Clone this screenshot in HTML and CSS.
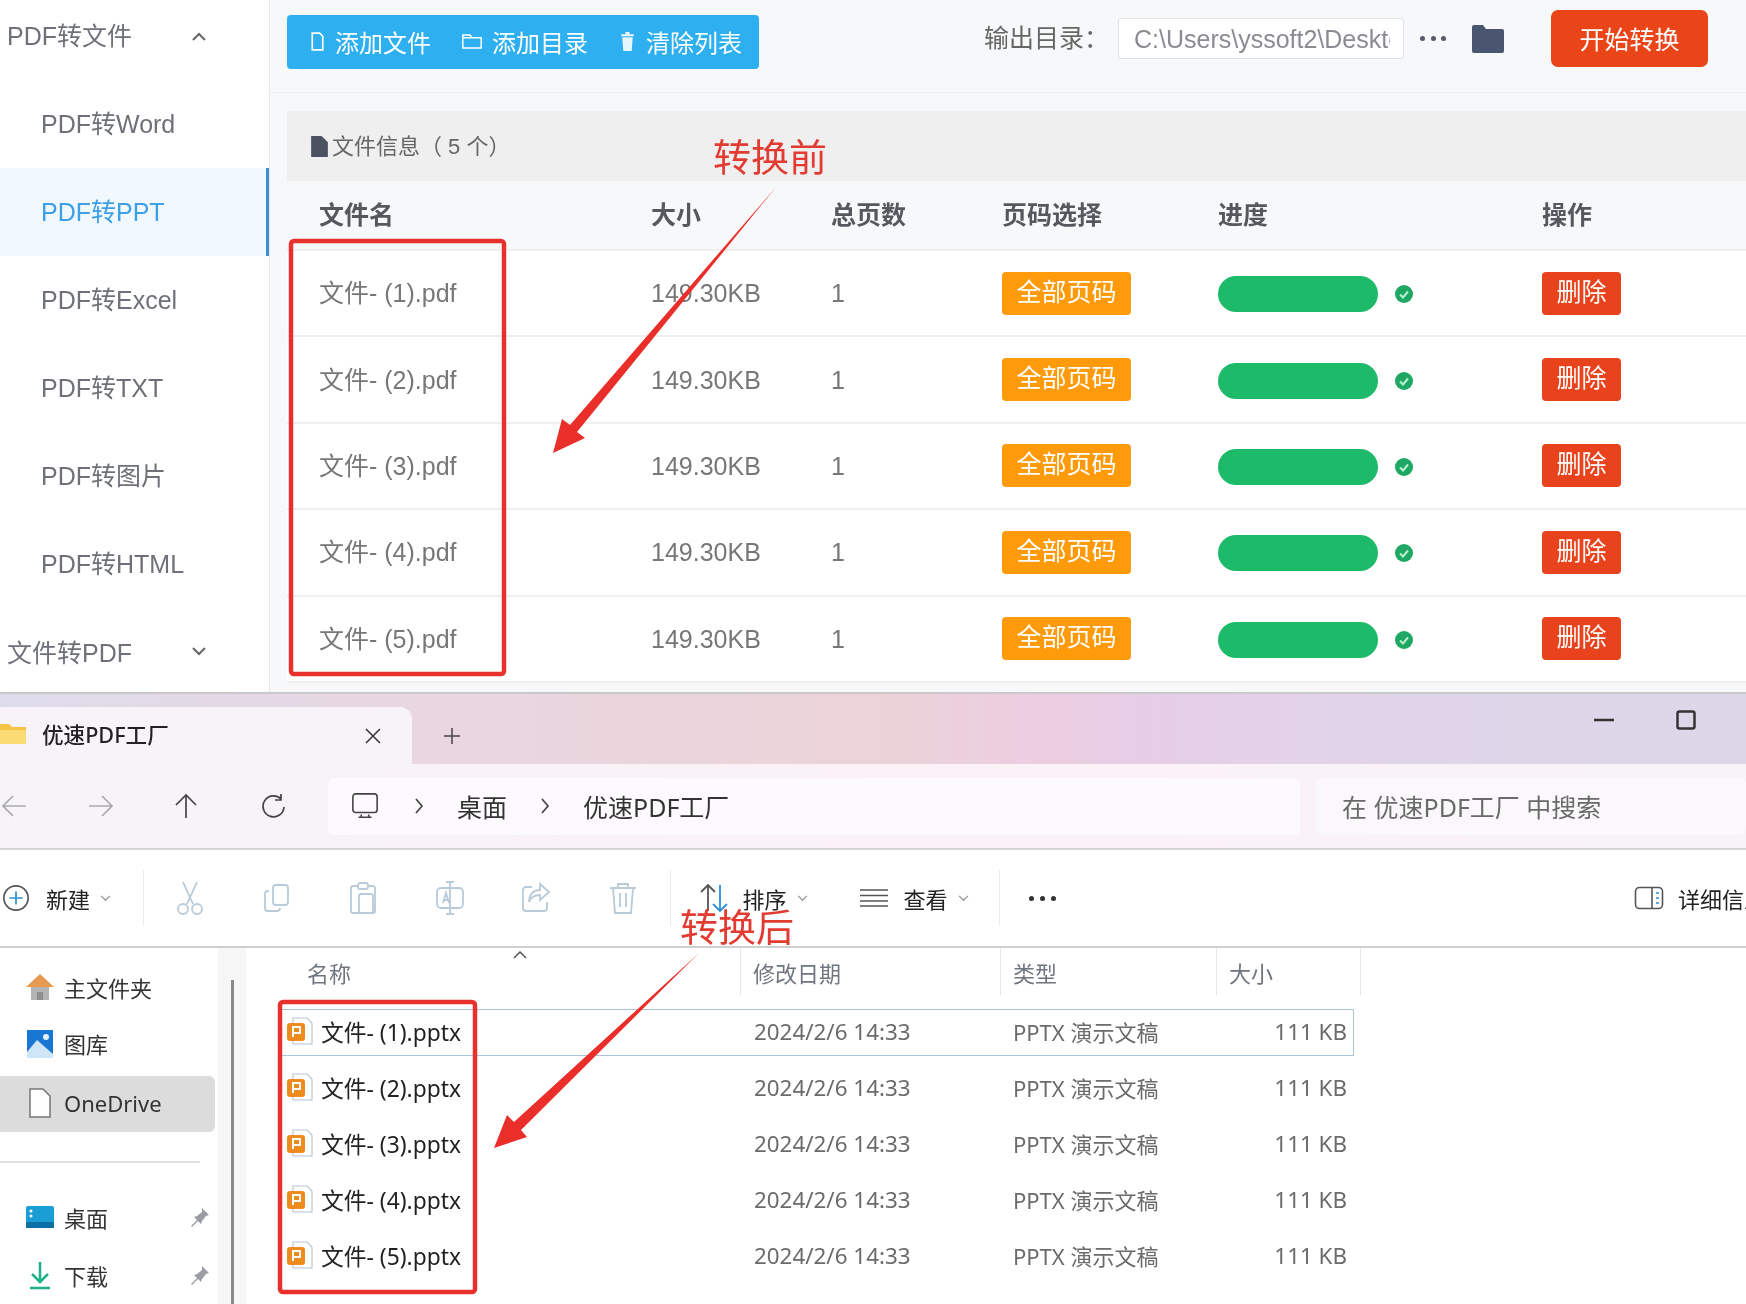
FILE: index.html
```html
<!DOCTYPE html>
<html lang="zh-CN">
<head>
<meta charset="utf-8">
<title>PDF转PPT</title>
<link rel="stylesheet" href="styles.css">
</head>
<body>
<div class="page">
  <section class="app">
    <nav class="side">
      <div class="side-item group first"><span>PDF转文件</span><svg class="chev" viewBox="0 0 16 16"><path d="M2 11l6-6 6 6"/></svg></div>
      <div class="side-item">PDF转Word</div>
      <div class="side-item active">PDF转PPT</div>
      <div class="side-item">PDF转Excel</div>
      <div class="side-item">PDF转TXT</div>
      <div class="side-item">PDF转图片</div>
      <div class="side-item">PDF转HTML</div>
      <div class="side-item group"><span>文件转PDF</span><svg class="chev" viewBox="0 0 16 16"><path d="M2 5l6 6 6-6"/></svg></div>
    </nav>
    <main class="main">
      <header class="bar">
        <div class="btn-group">
          <span class="bg-item"><svg class="bg-ico" viewBox="0 0 16 20"><path d="M3 2h7l3 3v13H3z"/></svg>添加文件</span>
          <span class="bg-item"><svg class="bg-ico wide" viewBox="0 0 24 20"><path d="M2 3h8l2 3h10v11H2zM2 6h10"/></svg>添加目录</span>
          <span class="bg-item"><svg class="bg-ico fill" viewBox="0 0 16 20"><path d="M6 1h4v2h4v2H2V3h4zM3 6h10l-1 13H4z"/></svg>清除列表</span>
        </div>
        <div class="out">
          <span class="out-label">输出目录：</span>
          <span class="out-input"><span class="out-text">C:\Users\yssoft2\Desktop</span></span>
          <span class="out-dots"><i></i><i></i><i></i></span>
          <svg class="out-folder" viewBox="0 0 34 30"><path d="M1 3a2 2 0 0 1 2-2h9l3 4h16a2 2 0 0 1 2 2v20a2 2 0 0 1-2 2H3a2 2 0 0 1-2-2z"/></svg>
          <span class="start">开始转换</span>
        </div>
      </header>
      <div class="content">
        <div class="info">
          <svg class="info-ico" viewBox="0 0 18 22"><path d="M1 1h10l6 6v14H1z"/></svg>
          <span class="info-text">文件信息（ 5 个）</span>
        </div>
        <div class="row head"><span>文件名</span><span>大小</span><span>总页数</span><span>页码选择</span><span>进度</span><span>操作</span></div>
        <div class="row"><span>文件- (1).pdf</span><span>149.30KB</span><span>1</span><span><b class="b-page">全部页码</b></span><span class="prog"><i class="bar-fill"></i><svg class="ok" viewBox="0 0 18 18"><circle cx="9" cy="9" r="9"/><path d="M5 9.5l3 3 5-6"/></svg></span><span><b class="b-del">删除</b></span></div>
        <div class="row"><span>文件- (2).pdf</span><span>149.30KB</span><span>1</span><span><b class="b-page">全部页码</b></span><span class="prog"><i class="bar-fill"></i><svg class="ok" viewBox="0 0 18 18"><circle cx="9" cy="9" r="9"/><path d="M5 9.5l3 3 5-6"/></svg></span><span><b class="b-del">删除</b></span></div>
        <div class="row"><span>文件- (3).pdf</span><span>149.30KB</span><span>1</span><span><b class="b-page">全部页码</b></span><span class="prog"><i class="bar-fill"></i><svg class="ok" viewBox="0 0 18 18"><circle cx="9" cy="9" r="9"/><path d="M5 9.5l3 3 5-6"/></svg></span><span><b class="b-del">删除</b></span></div>
        <div class="row"><span>文件- (4).pdf</span><span>149.30KB</span><span>1</span><span><b class="b-page">全部页码</b></span><span class="prog"><i class="bar-fill"></i><svg class="ok" viewBox="0 0 18 18"><circle cx="9" cy="9" r="9"/><path d="M5 9.5l3 3 5-6"/></svg></span><span><b class="b-del">删除</b></span></div>
        <div class="row"><span>文件- (5).pdf</span><span>149.30KB</span><span>1</span><span><b class="b-page">全部页码</b></span><span class="prog"><i class="bar-fill"></i><svg class="ok" viewBox="0 0 18 18"><circle cx="9" cy="9" r="9"/><path d="M5 9.5l3 3 5-6"/></svg></span><span><b class="b-del">删除</b></span></div>
      </div>
    </main>
  </section>

  <section class="explorer">
    <div class="titlebar">
      <div class="tab">
        <svg class="tab-folder" viewBox="0 0 26 24"><path d="M-2 2h11l3 3h14v17H-2z" fill="#f6c445"/><path d="M-2 8h28v14H-2z" fill="#fbdc74"/></svg>
        <span class="tab-title">优速PDF工厂</span>
        <svg class="tab-x" viewBox="0 0 16 16"><path d="M1 1l14 14M15 1L1 15"/></svg>
      </div>
      <svg class="tab-plus" viewBox="0 0 18 18"><path d="M9 1v16M1 9h16"/></svg>
      <div class="win">
        <svg class="win-min" viewBox="0 0 20 4"><path d="M0 2h20"/></svg>
        <svg class="win-max" viewBox="0 0 20 20"><rect x="1.5" y="1.5" width="17" height="17" rx="2"/></svg>
      </div>
    </div>
    <div class="navbar">
      <svg class="nav-ico dim" viewBox="0 0 26 26"><path d="M25 13H2M12 3L2 13l10 10"/></svg>
      <svg class="nav-ico dim to-up" viewBox="0 0 26 26"><path d="M1 13h23M14 3l10 10-10 10"/></svg>
      <svg class="nav-ico" viewBox="0 0 26 26"><path d="M13 25V2M3 12L13 2l10 10"/></svg>
      <svg class="nav-ico refresh" viewBox="0 0 26 26"><path d="M21 6a10.500 10.500 0 1 0 3 8M21 1v6h-6"/></svg>
      <div class="path">
        <svg class="pc" viewBox="0 0 30 30"><rect x="2" y="2" width="26" height="20" rx="3"/><path d="M8 27h14M11 24v3M19 24v3"/></svg>
        <svg class="crumb" viewBox="0 0 10 18"><path d="M2 2l6 7-6 7"/></svg>
        <span>桌面</span>
        <svg class="crumb" viewBox="0 0 10 18"><path d="M2 2l6 7-6 7"/></svg>
        <span>优速PDF工厂</span>
      </div>
      <div class="search">在 优速PDF工厂 中搜索</div>
    </div>
    <div class="toolbar">
      <svg class="new-ico" viewBox="0 0 30 30"><circle cx="15" cy="15" r="13"/><path class="blue" d="M15 8v14M8 15h14"/></svg>
      <span class="tb-text">新建</span>
      <svg class="tb-chev" viewBox="0 0 12 8"><path d="M1 1l5 5 5-5"/></svg>
      <i class="tb-div first"></i>
      <svg class="tb-ico" viewBox="0 0 30 34"><path d="M8 1l10 22M22 1L12 23"/><circle cx="8" cy="28" r="5"/><circle cx="22" cy="28" r="5"/></svg>
      <svg class="tb-ico" viewBox="0 0 30 34"><rect x="11" y="4" width="15" height="20" rx="3"/><path d="M7 10H6a3 3 0 0 0-3 3v14a3 3 0 0 0 3 3h9a3 3 0 0 0 3-3"/></svg>
      <svg class="tb-ico" viewBox="0 0 30 34"><path d="M9 5H5a2 2 0 0 0-2 2v23a2 2 0 0 0 2 2h20a2 2 0 0 0 2-2V7a2 2 0 0 0-2-2h-4"/><rect x="10" y="2" width="10" height="6" rx="2"/><rect x="11" y="13" width="14" height="19" rx="2"/></svg>
      <svg class="tb-ico" viewBox="0 0 30 34"><rect x="2" y="7" width="26" height="20" rx="4"/><path d="M15 1v32M11 1h8M11 33h8M8 22l3-10 3 10M9 19h4"/></svg>
      <svg class="tb-ico" viewBox="0 0 30 34"><path d="M11 6H5a3 3 0 0 0-3 3v18a3 3 0 0 0 3 3h18a3 3 0 0 0 3-3v-6M19 3l9 8-9 8v-5c-6 0-9 2-11 7 0-7 4-12 11-12z"/></svg>
      <svg class="tb-ico last" viewBox="0 0 30 34"><path d="M2 7h26M10 7V3h10v4M5 7l2 25h16l2-25M12 12v14M18 12v14"/></svg>
      <i class="tb-div second"></i>
      <svg class="sort-ico" viewBox="0 0 30 30"><path class="dark" d="M9 28V2M2 9l7-7 7 7"/><path class="blue" d="M21 2v26M14 21l7 7 7-7"/></svg>
      <span class="tb-text sort-text">排序</span>
      <svg class="tb-chev" viewBox="0 0 12 8"><path d="M1 1l5 5 5-5"/></svg>
      <svg class="view-ico" viewBox="0 0 28 18"><path d="M0 1h28M0 6.500h28M0 12h28M0 17h28"/></svg>
      <span class="tb-text">查看</span>
      <svg class="tb-chev" viewBox="0 0 12 8"><path d="M1 1l5 5 5-5"/></svg>
      <i class="tb-div third"></i>
      <span class="more"><i></i><i></i><i></i></span>
      <svg class="detail-ico" viewBox="0 0 30 24"><rect x="1.500" y="1.500" width="27" height="21" rx="4"/><path d="M18 2v20"/><path class="blue" d="M22 7h3M22 12h3M22 17h3"/></svg>
      <span class="tb-text detail">详细信息</span>
    </div>
    <div class="body">
      <aside class="tree">
        <div class="tree-item"><svg class="tree-ico" viewBox="0 0 30 30"><path d="M15 2L1 15h5v13h18V15h5z" fill="#e99a52"/><path d="M6 15h18v13H6z" fill="#b4b4b4"/><path d="M12 20h6v8h-6z" fill="#8e8e8e"/></svg><span>主文件夹</span></div>
        <div class="tree-item"><svg class="tree-ico" viewBox="0 0 30 30"><path d="M2 2h26v28H2z" fill="#1877d2"/><path d="M2 24l10-12 16 14v4H2z" fill="#cfe6f8"/><circle cx="21" cy="9" r="3" fill="#e6f2fb"/></svg><span>图库</span></div>
        <div class="tree-item sel"><svg class="tree-ico" viewBox="0 0 30 30"><path class="doc" d="M5 1h13l7 7v21H5z"/></svg><span>OneDrive</span></div>
        <div class="tree-div"></div>
        <div class="tree-item"><svg class="tree-ico" viewBox="0 0 30 30"><rect x="1" y="4" width="28" height="22" rx="2" fill="#1b9ed3"/><path d="M1 20h28v6H1z" fill="#0d6fa8"/><circle cx="6" cy="9" r="1.500" fill="#fff"/><circle cx="6" cy="14" r="1.500" fill="#fff"/></svg><span class="grow">桌面</span><svg class="pin" viewBox="0 0 20 20"><path d="M12 1l7 7-3 1-4 5-1 3-3-3-6 6-1-1 6-6-3-3 3-1 5-4z"/></svg></div>
        <div class="tree-item next"><svg class="tree-ico" viewBox="0 0 30 30"><path class="dl" d="M15 2v20M7 14l8 8 8-8M5 28h20"/></svg><span class="grow">下载</span><svg class="pin" viewBox="0 0 20 20"><path d="M12 1l7 7-3 1-4 5-1 3-3-3-6 6-1-1 6-6-3-3 3-1 5-4z"/></svg></div>
      </aside>
      <div class="scroll"><i></i></div>
      <div class="list">
        <div class="list-head">
          <span class="lh name"><span>名称</span><svg class="sort-up" viewBox="0 0 14 8"><path d="M1 7l6-6 6 6"/></svg></span>
          <span class="lh">修改日期</span>
          <span class="lh">类型</span>
          <span class="lh">大小</span>
        </div>
        <div class="list-rows">
          <div class="f-row hot"><span class="f-name"><svg class="ppt" viewBox="0 0 26 28"><path class="sheet" d="M6 1h14l5 5v21H6z"/><rect x="0" y="6" width="18" height="18" rx="3" fill="#ef8a1d"/><path d="M6 10h7v6H6z M6 16v4" fill="none" stroke="#fff" stroke-width="2"/></svg>文件- (1).pptx</span><span>2024/2/6 14:33</span><span>PPTX 演示文稿</span><span class="f-size">111 KB</span></div>
          <div class="f-row"><span class="f-name"><svg class="ppt" viewBox="0 0 26 28"><path class="sheet" d="M6 1h14l5 5v21H6z"/><rect x="0" y="6" width="18" height="18" rx="3" fill="#ef8a1d"/><path d="M6 10h7v6H6z M6 16v4" fill="none" stroke="#fff" stroke-width="2"/></svg>文件- (2).pptx</span><span>2024/2/6 14:33</span><span>PPTX 演示文稿</span><span class="f-size">111 KB</span></div>
          <div class="f-row"><span class="f-name"><svg class="ppt" viewBox="0 0 26 28"><path class="sheet" d="M6 1h14l5 5v21H6z"/><rect x="0" y="6" width="18" height="18" rx="3" fill="#ef8a1d"/><path d="M6 10h7v6H6z M6 16v4" fill="none" stroke="#fff" stroke-width="2"/></svg>文件- (3).pptx</span><span>2024/2/6 14:33</span><span>PPTX 演示文稿</span><span class="f-size">111 KB</span></div>
          <div class="f-row"><span class="f-name"><svg class="ppt" viewBox="0 0 26 28"><path class="sheet" d="M6 1h14l5 5v21H6z"/><rect x="0" y="6" width="18" height="18" rx="3" fill="#ef8a1d"/><path d="M6 10h7v6H6z M6 16v4" fill="none" stroke="#fff" stroke-width="2"/></svg>文件- (4).pptx</span><span>2024/2/6 14:33</span><span>PPTX 演示文稿</span><span class="f-size">111 KB</span></div>
          <div class="f-row"><span class="f-name"><svg class="ppt" viewBox="0 0 26 28"><path class="sheet" d="M6 1h14l5 5v21H6z"/><rect x="0" y="6" width="18" height="18" rx="3" fill="#ef8a1d"/><path d="M6 10h7v6H6z M6 16v4" fill="none" stroke="#fff" stroke-width="2"/></svg>文件- (5).pptx</span><span>2024/2/6 14:33</span><span>PPTX 演示文稿</span><span class="f-size">111 KB</span></div>
        </div>
      </div>
    </div>
  </section>

  <svg class="marks" viewBox="0 0 1746 1304">
    <rect class="box" x="291" y="241" width="213" height="433" rx="3"/>
    <polygon class="arrow" points="776,187 577,432 585,438 553,453 562,419 570,425"/>
    <rect class="box" x="280" y="1002" width="195" height="290" rx="3"/>
    <polygon class="arrow" points="699,953 521,1130 527,1137 494,1148 507,1115 514,1122"/>
  </svg>
  <span class="note before">转换前</span>
  <span class="note after">转换后</span>
</div>
</body>
</html>
```

FILE: styles.css
```css
* { box-sizing: border-box; }
html, body { margin: 0; padding: 0; background: #fff; }
.page {
  position: relative;
  width: 1746px;
  height: 1304px;
  overflow: hidden;
  display: flex;
  flex-direction: column;
  filter: blur(0.7px);
  font-family: "Liberation Sans", "Noto Sans CJK SC", sans-serif;
}

/* upper application */
.app { display: flex; height: 694px; border-bottom: 2px solid #c9c9c9; background: #f7f8fa; overflow: hidden; flex: none; }
.side { width: 270px; flex: none; background: #fff; border-right: 1px solid #e9e9e9; }
.side-item { height: 88px; flex: none; display: flex; align-items: center; padding-left: 41px; padding-bottom: 4px; font-size: 25px; color: #6e7178; }
.side-item.group { padding-left: 7px; padding-right: 62px; justify-content: space-between; padding-bottom: 2px; }
.side-item.first { height: 80px; padding-bottom: 12px; }
.first .chev { margin-top: 6px; }
.side-item.active { background: #f0f8fe; color: #3d9fe6; border-right: 3px solid #3a8fd0; }
.chev { width: 16px; height: 16px; fill: none; stroke: #666; stroke-width: 2; }

.main { flex: 1; min-width: 0; display: flex; flex-direction: column; }
.bar { height: 93px; flex: none; display: flex; align-items: flex-start; justify-content: space-between; padding-left: 17px; padding-right: 38px; border-bottom: 1px solid #eeeff1; }
.btn-group { margin-top: 15px; width: 472px; height: 54px; background: #2eb0f0; border-radius: 4px; display: flex; align-items: center; gap: 30px; padding: 0 0 2px 22px; color: #fff; font-size: 24px; }
.bg-item { display: flex; align-items: center; gap: 9px; white-space: nowrap; }
.bg-ico { width: 17px; height: 21px; fill: none; stroke: #fff; stroke-width: 1.6; }
.bg-ico.wide { width: 22px; }
.bg-ico.fill { width: 19px; fill: #e6f6ff; stroke: none; }
.out { display: flex; align-items: center; height: 57px; margin-top: 10px; color: #666; font-size: 25px; }
.out-label { width: 134px; margin-top: -6px; flex: none; white-space: nowrap; }
.out-input { width: 286px; height: 41px; flex: none; padding: 2px 13px 0 15px; background: #fff; border: 1px solid #e2e3e6; border-radius: 3px; display: flex; align-items: center; color: #8a8c92; overflow: hidden; }
.out-text { display: block; overflow: hidden; white-space: nowrap; }
.out-dots { width: 26px; margin-left: 16px; display: flex; justify-content: space-between; flex: none; }
.out-dots i { width: 5px; height: 5px; border-radius: 50%; background: #555a66; }
.out-folder { width: 34px; height: 30px; margin-left: 25px; flex: none; fill: #4a5670; }
.start { width: 157px; height: 57px; margin-left: 46px; padding-bottom: 2px; flex: none; background: #ea4419; color: #fff; border-radius: 7px; display: flex; align-items: center; justify-content: center; }

.content { margin: 18px 0 0 17px; display: flex; flex-direction: column; }
.info { height: 70px; flex: none; display: flex; align-items: center; gap: 3px; padding-left: 23px; background: #efefef; color: #666; font-size: 22px; }
.info-text { padding-bottom: 4px; }
.info-ico { width: 19px; height: 23px; fill: #4a5262; }
.row { display: grid; grid-template-columns: 364px 180px 171px 216px 324px 1fr; height: 86.400px; flex: none; align-items: center; background: #fff; border-bottom: 2px solid #efefef; color: #777; font-size: 25px; line-height: 32px; }
.row > span:first-child { padding-left: 32px; }
.row.head { height: 70px; background: #f7f8fa; color: #56585e; font-weight: 700; }
.b-page, .b-del { display: flex; align-items: center; justify-content: center; height: 43px; padding-bottom: 3px; border-radius: 4px; color: #fff; font-weight: 400; }
.b-page { width: 129px; background: #ff9a0a; }
.b-del { width: 79px; background: #e8431c; }
.prog { display: flex; align-items: center; padding-top: 2px; }
.bar-fill { display: block; width: 160px; height: 36px; border-radius: 18px; background: #1dba6a; }
.ok { width: 18px; height: 18px; margin-left: 17px; }
.ok circle { fill: #1fa863; }
.ok path { fill: none; stroke: #b8f0cf; stroke-width: 2; }

/* file explorer */
.explorer { flex: 1; min-height: 0; display: flex; flex-direction: column; background: #fff; font-family: "Noto Sans", "Noto Sans CJK SC", sans-serif; color: #222; }
.titlebar { height: 70px; flex: none; display: flex; align-items: flex-end; background: linear-gradient(90deg, #dedcec 0%, #e9d6e0 25%, #ebd3d8 50%, #ebcde0 60%, #e6cde8 66%, #e1d4ea 78%, #dcd7e8 100%); }
.tab { width: 412px; height: 57px; flex: none; display: flex; align-items: center; background: #f8f3f8; border-radius: 0 12px 0 0; }
.tab-folder { width: 26px; height: 24px; flex: none; margin-bottom: 3px; }
.tab-title { margin-left: 16px; padding-bottom: 4px; font-size: 21.600px; font-weight: 500; flex: 1; }
.tab-x { width: 16px; height: 16px; margin-right: 31px; fill: none; stroke: #333; stroke-width: 1.5; }
.tab-plus { width: 18px; height: 18px; margin: 0 0 19px 31px; fill: none; stroke: #444; stroke-width: 1.5; }
.win { margin-left: auto; align-self: flex-start; display: flex; align-items: center; gap: 62px; padding: 16px 50px 0 0; }
.win-min { width: 20px; height: 4px; stroke: #333; stroke-width: 2.500; }
.win-max { width: 20px; height: 20px; fill: none; stroke: #333; stroke-width: 2.500; }

.navbar { height: 86px; flex: none; display: flex; align-items: center; padding-left: 1px; background: linear-gradient(90deg, #f6f3f9, #fbf2f7 60%, #f7f3f8); border-bottom: 2px solid #d6d6da; }
.nav-ico { width: 26px; height: 26px; margin-right: 61px; flex: none; fill: none; stroke: #444; stroke-width: 1.7; }
.nav-ico.dim { stroke: #aaa; }
.nav-ico.to-up { margin-right: 59px; }
.nav-ico.refresh { margin-right: 42px; }
.path { width: 972px; height: 57px; flex: none; display: flex; align-items: center; padding-left: 23px; background: #fdfafd; border-radius: 6px; font-size: 25px; color: #333; }
.pc { width: 28px; height: 30px; margin-right: 2px; fill: none; stroke: #444; stroke-width: 1.7; }
.crumb { width: 10px; height: 18px; margin: 0 33px; fill: none; stroke: #444; stroke-width: 1.7; }
.search { flex: 1; height: 57px; margin-left: 16px; padding-left: 26px; background: #fbf8fb; border-radius: 6px; display: flex; align-items: center; font-size: 25px; color: #6a6a6a; white-space: nowrap; }

.toolbar { height: 98px; flex: none; display: flex; align-items: center; border-bottom: 2px solid #cfcfcf; padding-left: 2px; }
.new-ico { width: 28px; height: 28px; flex: none; fill: none; stroke: #555; stroke-width: 1.800; }
.blue { stroke: #2d8fd8; }
.dark { stroke: #555; }
.tb-text { margin-left: 16px; font-size: 22px; white-space: nowrap; }
.tb-text.sort-text { margin-left: 14px; }
.tb-chev { width: 11px; height: 7px; margin-left: 10px; flex: none; fill: none; stroke: #999; stroke-width: 1.500; }
.tb-div { width: 1px; height: 56px; flex: none; background: #ececec; }
.tb-div.first { margin: 0 31px 0 32px; }
.tb-div.second { margin: 0 28px 0 32px; }
.tb-div.third { margin: 0 29px 0 30px; }
.tb-ico { width: 30px; height: 34px; margin-right: 56.500px; flex: none; fill: none; stroke: #b9cad8; stroke-width: 1.800; }
.tb-ico.last { margin-right: 0; }
.sort-ico { width: 30px; height: 30px; flex: none; fill: none; stroke-width: 1.800; }
.view-ico { width: 28px; height: 18px; margin-left: 52px; flex: none; fill: none; stroke: #555; stroke-width: 1.400; }
.more { display: flex; gap: 6px; flex: none; width: 30px; }
.more i { width: 5px; height: 5px; border-radius: 50%; background: #333; flex: none; }
.detail-ico { width: 30px; height: 24px; margin-left: auto; flex: none; fill: none; stroke: #555; stroke-width: 1.600; }
.tb-text.detail { flex: none; width: 68px; overflow: hidden; margin-left: 14px; }

.body { flex: 1; min-height: 0; display: flex; overflow: hidden; }
.tree { width: 218px; flex: none; padding-top: 12px; font-size: 22px; color: #333; }
.tree-item { height: 56px; display: flex; align-items: center; padding: 0 8px 3px 25px; gap: 9px; }
.tree-item.sel { margin: 4px 3px 0 0; background: #dcdcdc; border-radius: 0 6px 6px 0; }
.tree-item.next { margin-top: 2px; }
.tree-ico { width: 30px; height: 30px; flex: none; }
.doc { fill: #fff; stroke: #777; stroke-width: 1.500; }
.dl { fill: none; stroke: #1fb28a; stroke-width: 2.500; }
.grow { flex: 1; }
.tree-div { height: 2px; width: 200px; margin: 29px 0 27px; background: #dfe1e4; }
.pin { width: 20px; height: 20px; fill: #9a9ea3; flex: none; }
.scroll { width: 28px; flex: none; background: #f6f6f6; display: flex; justify-content: center; padding-top: 32px; }
.scroll i { display: block; width: 3px; height: 100%; background: #8a8a8a; }
.list { flex: 1; min-width: 0; font-size: 22.400px; color: #6b6b6b; }
.list-head { height: 47px; display: grid; grid-template-columns: 495px 260px 216px 144px; }
.lh { display: flex; align-items: center; padding-left: 12px; border-right: 1px solid #e6e6e6; color: #6f7680; font-size: 22px; }
.lh.name { padding-left: 61px; }
.sort-up { width: 14px; height: 8px; margin: -34px 0 0 162px; fill: none; stroke: #555; stroke-width: 1.500; }
.list-rows { margin: 14px 0 0 34px; width: 1074px; display: flex; flex-direction: column; gap: 9px; }
.f-row { height: 47px; display: grid; grid-template-columns: 461px 259px 216px 1fr; align-items: center; border: 1px solid transparent; padding-bottom: 3px; white-space: nowrap; }
.f-row.hot { border-color: #a9c5d9; }
.f-row > span:nth-child(2) { padding-left: 12px; }
.f-row > span:nth-child(3) { padding-left: 12px; font-size: 22px; }
.f-name { display: flex; align-items: center; gap: 8px; padding-left: 6px; color: #222; font-size: 22.800px; }
.ppt { width: 26px; height: 28px; flex: none; }
.sheet { fill: #fff; stroke: #b9c4ce; stroke-width: 1.200; }
.f-size { text-align: right; padding-right: 6px; }

/* annotations */
.marks { position: absolute; left: 0; top: 0; width: 1746px; height: 1304px; pointer-events: none; }
.box { fill: none; stroke: #e8302c; stroke-width: 4.500; }
.arrow { fill: #ea2e2a; }
.note { position: absolute; color: #e23b32; font-size: 38px; line-height: 44px; white-space: nowrap; font-family: "Noto Sans CJK SC", sans-serif; }
.before { left: 713px; top: 133px; }
.after { left: 680px; top: 903px; }
```
